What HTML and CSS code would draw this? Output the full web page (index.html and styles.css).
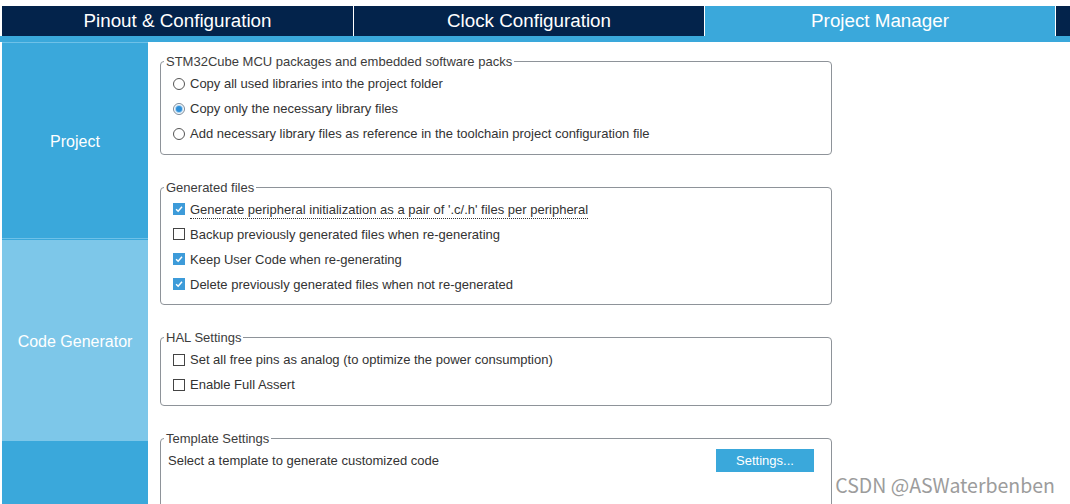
FILE: index.html
```html
<!DOCTYPE html>
<html lang="en">
<head>
  <meta charset="UTF-8" />
  <meta name="viewport" content="width=device-width, initial-scale=1.0" />
  <title>Project Manager</title>
  <link rel="stylesheet" href="styles.css">
</head>
<body>
  <nav class="tabs">
    <div class="tab">Pinout &amp; Configuration</div>
    <div class="tab">Clock Configuration</div>
    <div class="tab active">Project Manager</div>
    <div class="tab-rest"></div>
  </nav>
  <div class="tab-line"></div>

  <div class="main">
    <aside class="sidebar">
      <div class="side-item current">Project</div>
      <div class="side-item selected">Code Generator</div>
    </aside>

    <section class="content">
      <fieldset class="group">
        <legend>STM32Cube MCU packages and embedded software packs</legend>
        <label class="opt"><span class="radio"></span>Copy all used libraries into the project folder</label>
        <label class="opt"><span class="radio on"></span>Copy only the necessary library files</label>
        <label class="opt"><span class="radio"></span>Add necessary library files as reference in the toolchain project configuration file</label>
      </fieldset>

      <fieldset class="group">
        <legend>Generated files</legend>
        <label class="opt"><span class="check on"><svg viewBox="0 0 12 12"><path d="M2.5 6.2 L5 8.6 L9.6 3.4" /></svg></span><span class="focus">Generate peripheral initialization as a pair of '.c/.h' files per peripheral</span></label>
        <label class="opt"><span class="check"></span>Backup previously generated files when re-generating</label>
        <label class="opt"><span class="check on"><svg viewBox="0 0 12 12"><path d="M2.5 6.2 L5 8.6 L9.6 3.4" /></svg></span>Keep User Code when re-generating</label>
        <label class="opt"><span class="check on"><svg viewBox="0 0 12 12"><path d="M2.5 6.2 L5 8.6 L9.6 3.4" /></svg></span>Delete previously generated files when not re-generated</label>
      </fieldset>

      <fieldset class="group">
        <legend>HAL Settings</legend>
        <label class="opt"><span class="check"></span>Set all free pins as analog (to optimize the power consumption)</label>
        <label class="opt"><span class="check"></span>Enable Full Assert</label>
      </fieldset>

      <fieldset class="group last">
        <legend>Template Settings</legend>
        <div class="template-row">
          <span>Select a template to generate customized code</span>
          <button class="btn">Settings...</button>
        </div>
      </fieldset>
    </section>
  </div>

  <div class="watermark">CSDN @ASWaterbenben</div>
</body>
</html>
```

FILE: styles.css
```css
body {
  margin: 0;
  padding-top: 6px;
  background: #fff;
  font-family: "Liberation Sans", Arial, sans-serif;
  color: #333;
  height: 498px;
  overflow: hidden;
  position: relative;
}

.tabs {
  display: flex;
  gap: 1px;
  margin-left: 2px;
  height: 30px;
  background: #fff;
}

.tab {
  width: 350px;
  background: #03234b;
  color: #fff;
  font-size: 18.8px;
  line-height: 30px;
  text-align: center;
}

.tab:first-child {
  width: 351px;
}

.tab.active {
  background: #3aa8db;
}

.tab-rest {
  flex: 1;
  background: #03234b;
}

.tab-line {
  height: 6px;
  background: #3aa8db;
}

.main {
  display: flex;
  padding-left: 2px;
  height: 462px;
}

.sidebar {
  width: 146px;
  background: #3aa8db;
  display: flex;
  flex-direction: column;
}

.side-item {
  display: flex;
  align-items: center;
  justify-content: center;
  color: #fff;
  font-size: 16px;
  padding-top: 3px;
  box-sizing: border-box;
}

.side-item.current {
  height: 197px;
  border-top: 1px solid #6ec1e8;
  border-bottom: 1px solid #6ec1e8;
  margin-bottom: 1px;
}

.side-item.selected {
  height: 201px;
  background: #7dc7e9;
}

.content {
  margin-left: 12px;
  width: 672px;
  padding-top: 12px;
}

.group {
  margin: 0 0 25px;
  border: 1px solid #8e9399;
  border-radius: 4px;
  padding: 2px 12px 7.5px;
  font-size: 13px;
}

.group legend {
  margin-left: -9px;
  padding: 0 2px;
  line-height: 15px;
  color: #3c3c3c;
}

.group.last {
  height: 80px;
}

.opt {
  display: flex;
  align-items: center;
  gap: 5px;
  height: 25px;
}

.radio {
  width: 10px;
  height: 10px;
  border: 1px solid #555;
  border-radius: 50%;
  background: #fff;
  position: relative;
  flex: none;
}

.radio.on {
  border-color: #7b8a99;
}

.radio.on::after {
  content: "";
  position: absolute;
  left: 2px;
  top: 2px;
  width: 6px;
  height: 6px;
  border-radius: 50%;
  background: #2e8fd8;
  box-shadow: 0 0 0 1px #a9d3f1;
}

.check {
  width: 10px;
  height: 10px;
  border: 1px solid #444;
  background: #fff;
  flex: none;
  display: flex;
}

.check.on {
  border-color: #3d9bd9;
  background: #3d9bd9;
}

.check svg {
  width: 10px;
  height: 10px;
}

.check path {
  fill: none;
  stroke: #fff;
  stroke-width: 1.8;
}

.focus {
  border-bottom: 1px dotted #333;
  padding-bottom: 1px;
  margin-top: 2px;
}

.template-row {
  display: flex;
  align-items: center;
  justify-content: space-between;
  height: 25px;
  margin-left: -5px;
  padding-right: 5px;
}

.btn {
  width: 98px;
  height: 23px;
  border: none;
  background: #3aa8db;
  color: #fff;
  font-family: "Liberation Sans", Arial, sans-serif;
  font-size: 13px;
  padding: 0;
}

.watermark {
  position: absolute;
  right: 15px;
  bottom: 5px;
  font-family: "Noto Sans CJK SC", "Noto Sans", sans-serif;
  font-size: 19.5px;
  color: #9c9c9c;
}
```
